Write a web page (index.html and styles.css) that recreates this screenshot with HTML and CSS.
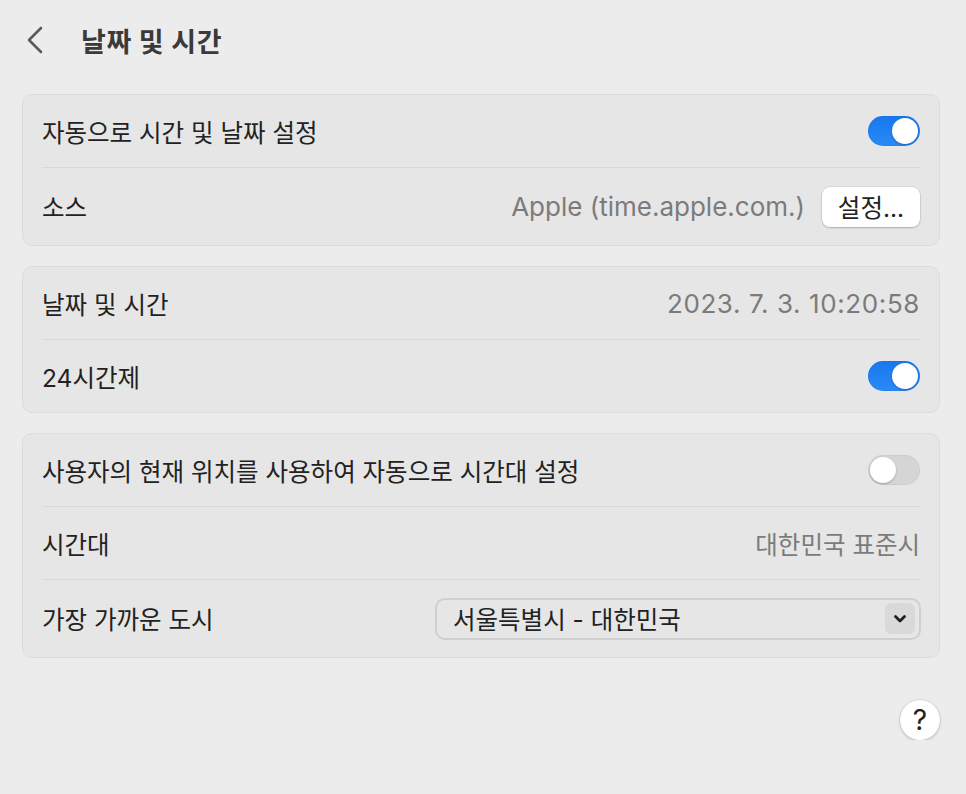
FILE: index.html
```html
<!DOCTYPE html>
<html lang="ko">
<head>
    <meta charset="UTF-8">
    <meta name="viewport" content="width=device-width, initial-scale=1.0">
    <title>날짜 및 시간</title>
    <link rel="stylesheet" href="styles.css">
</head>
<body>
    <div class="page">
        <div class="header">
            <button class="back" aria-label="뒤로">
                <svg width="18" height="28" viewBox="0 0 18 28"><path d="M15 2 L3 14 L15 26" fill="none" stroke="#5a5a5a" stroke-width="2.6" stroke-linecap="round" stroke-linejoin="round"/></svg>
            </button>
            <h1>날짜 및 시간</h1>
        </div>

        <div class="card">
            <div class="row">
                <span class="label">자동으로 시간 및 날짜 설정</span>
                <span class="toggle on"><span class="knob"></span></span>
            </div>
            <div class="row tall">
                <span class="label">소스</span>
                <div class="right">
                    <span class="value latin">Apple (time.apple.com.)</span>
                    <button class="btn">설정...</button>
                </div>
            </div>
        </div>

        <div class="card">
            <div class="row">
                <span class="label">날짜 및 시간</span>
                <span class="value latin date">2023. 7. 3. 10:20:58</span>
            </div>
            <div class="row">
                <span class="label">24시간제</span>
                <span class="toggle on"><span class="knob"></span></span>
            </div>
        </div>

        <div class="card">
            <div class="row">
                <span class="label">사용자의 현재 위치를 사용하여 자동으로 시간대 설정</span>
                <span class="toggle"><span class="knob"></span></span>
            </div>
            <div class="row">
                <span class="label">시간대</span>
                <span class="value">대한민국 표준시</span>
            </div>
            <div class="row tall">
                <span class="label">가장 가까운 도시</span>
                <div class="popup">
                    <span>서울특별시 - 대한민국</span>
                    <span class="popup-arrow">
                        <svg width="16" height="12" viewBox="0 0 16 12"><path d="M3.5 3.5 L8 8 L12.5 3.5" fill="none" stroke="#1e1e1e" stroke-width="2.8" stroke-linecap="round" stroke-linejoin="round"/></svg>
                    </span>
                </div>
            </div>
        </div>

        <div class="footer">
            <button class="help">?</button>
        </div>
    </div>
</body>
</html>
```

FILE: styles.css
```css
body { margin: 0; background: #ececec; font-family: "Inter", "Noto Sans CJK KR", sans-serif; color: #222; }
.page { width: 918px; padding: 0 26px 0 22px; }
.header { height: 80px; display: flex; align-items: center; margin-bottom: 14px; }
.back { background: none; border: none; padding: 0; margin-left: 4px; width: 55px; display: flex; align-items: center; }
h1 { margin: 0; font-size: 27px; font-weight: 700; color: #3a3a3a; letter-spacing: 0.6px; }
.card { background: #e6e6e6; border: 1px solid #dcdcdc; border-radius: 10px; padding: 0 19px; margin-bottom: 20px; }
.row { min-height: 72px; display: flex; align-items: center; justify-content: space-between; border-top: 1px solid #d8d8d8; font-size: 24.5px; }
.row:first-child { border-top: none; }
.row.tall { min-height: 77px; }
.label { color: #222; }
.value { color: #7b7b7b; }
.latin { font-size: 26px; }
.date { letter-spacing: 0.6px; }
.right { display: flex; align-items: center; gap: 17px; }
.toggle { width: 52px; height: 30px; border-radius: 15px; background: #d5d5d5; position: relative; box-shadow: inset 0 0 0 1px rgba(0,0,0,0.04); }
.toggle.on { background: linear-gradient(#1877ee, #2a8af5); }
.knob { position: absolute; top: 2px; left: 2px; width: 26px; height: 26px; border-radius: 50%; background: #fff; box-shadow: 0 1px 2px rgba(0,0,0,0.25); }
.toggle.on .knob { left: 24px; }
.btn { width: 98px; height: 40px; background: #fff; border: none; border-radius: 8px; box-shadow: 0 0 0 0.5px rgba(0,0,0,0.12), 0 1px 2px rgba(0,0,0,0.2); font: inherit; font-size: 24.5px; color: #222; padding: 0; }
.popup { border: 2px solid #cfcfcf; border-radius: 10px; display: flex; align-items: center; justify-content: space-between; padding: 0 4px 0 16px; box-sizing: border-box; width: 486px; height: 42px; margin-right: -1px; }
.popup-arrow { width: 30px; height: 31px; background: #d9d9d9; border-radius: 6px; display: flex; align-items: center; justify-content: center; }
.footer { display: flex; justify-content: flex-end; padding-top: 22px; }
.help { width: 40px; height: 40px; border-radius: 50%; border: none; background: #fff; box-shadow: 0 0 0 0.5px rgba(0,0,0,0.1), 0 1px 3px rgba(0,0,0,0.22); font-family: "Inter", sans-serif; font-size: 28px; font-weight: 400; color: #222; padding: 0; }
```
